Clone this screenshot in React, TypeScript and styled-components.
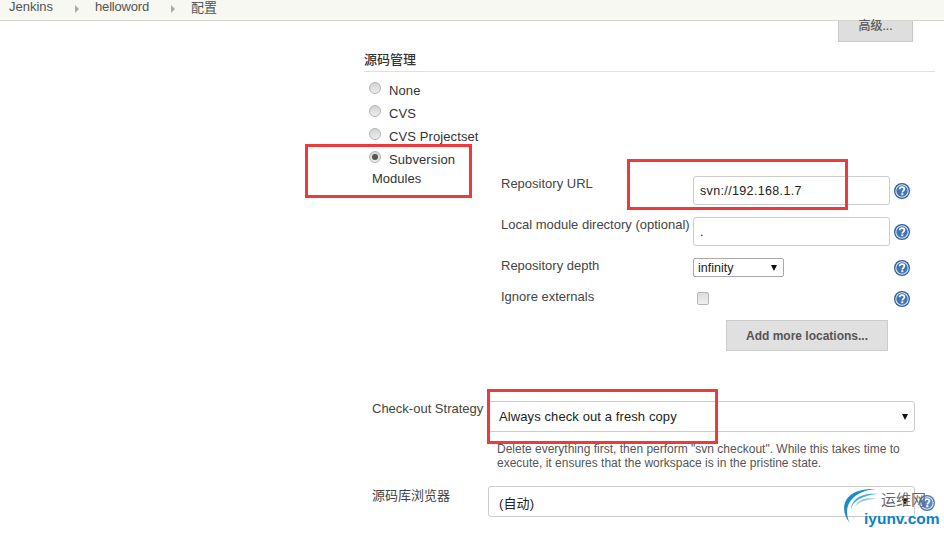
import React from 'react';
import styled, { createGlobalStyle } from 'styled-components';

const GlobalStyle = createGlobalStyle`
  html, body {
    margin: 0;
    padding: 0;
    background: #fff;
  }
  body {
    font-family: 'Liberation Sans', 'Noto Sans CJK SC', sans-serif;
    font-size: 13px;
    color: #333;
  }
`;

const Page = styled.div`
  position: relative;
  width: 944px;
  height: 535px;
  overflow: hidden;
`;

const Breadcrumb = styled.nav`
  display: flex;
  align-items: center;
  height: 20px;
  padding-left: 9px;
  background: #f6f8f1;
  border-bottom: 1px solid #d3d7cf;
  color: #555;
  font-size: 13px;
`;

const Crumb = styled.span<{ $tight?: boolean }>`
  margin-top: -7px;
  letter-spacing: ${p => (p.$tight ? '-0.2px' : '0')};
`;

const CrumbArrow = styled.span`
  width: 0;
  height: 0;
  margin: -3px 16px 0 22px;
  border-left: 4px solid #aaa;
  border-top: 4px solid transparent;
  border-bottom: 4px solid transparent;
`;

const Content = styled.main`
  padding: 0 9px 0 364px;
`;

const AdvancedRow = styled.div`
  display: flex;
  justify-content: flex-end;
  padding-right: 22px;
`;

const AdvancedButton = styled.button`
  width: 75px;
  height: 21px;
  padding: 0 0 10px;
  background: #dedede;
  border: 1px solid #c8c8c8;
  border-top: 0;
  color: #555;
  font: 12px/6px 'Liberation Sans', 'Noto Sans CJK SC', sans-serif;
  -webkit-text-stroke: 0.2px #555;
`;

const SectionTitle = styled.h3`
  margin: 10px 0 0;
  padding-bottom: 4px;
  height: 15px;
  border-bottom: 1px solid #e0e0e0;
  color: #333;
  font-size: 13px;
  line-height: 15px;
  font-weight: 500;
`;

const RadioList = styled.div`
  display: flex;
  flex-direction: column;
  margin-top: 7px;
  padding-left: 5px;
`;

const RadioRow = styled.label`
  display: flex;
  align-items: flex-start;
  gap: 8px;
  height: 23px;
  line-height: 23px;
  color: #333;
  letter-spacing: 0.1px;
`;

const RadioDot = styled.span<{ $checked?: boolean }>`
  position: relative;
  flex: none;
  width: 12px;
  height: 12px;
  margin-top: 3px;
  border: 1px solid #b5b5b5;
  border-radius: 50%;
  box-sizing: border-box;
  background: linear-gradient(#d4d4d4, #ececec);

  &::after {
    content: '';
    display: ${p => (p.$checked ? 'block' : 'none')};
    position: absolute;
    left: 2px;
    top: 2px;
    width: 6px;
    height: 6px;
    border-radius: 50%;
    background: #555;
  }
`;

const ModulesGrid = styled.div`
  display: grid;
  grid-template-columns: 129px 192px 197px 1fr;
  margin-top: 5px;
  padding-left: 8px;
`;

const ModulesTitle = styled.div`
  grid-column: 1;
  margin-top: -5px;
  color: #333;
  line-height: 15px;
`;

const FieldLabel = styled.div`
  grid-column: 2;
  color: #444;
  line-height: 15px;
  white-space: nowrap;
`;

const FieldCell = styled.div<{ $height: number }>`
  grid-column: 3;
  height: ${p => p.$height}px;
`;

const HelpCell = styled.div<{ $top: number }>`
  grid-column: 4;
  padding: ${p => p.$top}px 0 0 4px;
`;

const TextBox = styled.input`
  display: block;
  box-sizing: border-box;
  width: 197px;
  height: 29px;
  padding: 0 6px;
  background: #fff;
  border: 1px solid #ccc;
  border-radius: 3px;
  color: #222;
  font: 12.5px 'Liberation Sans', sans-serif;
  letter-spacing: 0.35px;
  outline: none;
`;

const SelectWrap = styled.div<{ $width: number }>`
  position: relative;
  width: ${p => p.$width}px;

  &::after {
    content: '';
    position: absolute;
    right: 7px;
    top: 50%;
    margin-top: -3px;
    border-top: 6px solid #111;
    border-left: 3.5px solid transparent;
    border-right: 3.5px solid transparent;
  }
`;

const SmallSelect = styled.select`
  display: block;
  appearance: none;
  box-sizing: border-box;
  width: 100%;
  height: 19px;
  padding: 0 4px;
  background: #fff;
  border: 1px solid #a9a9a9;
  border-radius: 2px;
  color: #222;
  font: 12.5px 'Liberation Sans', sans-serif;
`;

const WideSelect = styled.select<{ $top?: number }>`
  display: block;
  appearance: none;
  box-sizing: border-box;
  width: 100%;
  height: 31px;
  padding: ${p => p.$top ?? 0}px 10px 0;
  background: #fff;
  border: 1px solid #ccc;
  border-radius: 3px;
  color: #222;
  font: 13px 'Liberation Sans', 'Noto Sans CJK SC', sans-serif;
  letter-spacing: 0.1px;
`;

const CheckBox = styled.span`
  display: block;
  box-sizing: border-box;
  width: 12px;
  height: 13px;
  margin: 3px 0 0 4px;
  background: linear-gradient(#dcdcdc, #f0f0f0);
  border: 1px solid #b5b5b5;
  border-radius: 2px;
`;

const AddRow = styled.div`
  grid-column: 2 / 5;
  padding: 7px 0 0 225px;
`;

const AddButton = styled.button`
  display: block;
  width: 162px;
  height: 31px;
  background: #e0e0e0;
  border: 1px solid #ccc;
  color: #555;
  font: bold 12px 'Liberation Sans', sans-serif;
`;

const StrategyRow = styled.div`
  display: grid;
  grid-template-columns: 116px 427px;
  margin-top: 50px;
  padding-left: 8px;
`;

const StrategyLabel = styled.div<{ $top: number }>`
  padding-top: ${p => p.$top}px;
  color: #444;
  line-height: 15px;
  white-space: nowrap;
`;

const Description = styled.p`
  margin: 0;
  padding: 10px 0 16px 9px;
  color: #555;
  font-size: 12px;
  line-height: 14px;
`;

const HelpSvg = styled.svg`
  display: block;
`;

const HelpIcon = () => (
  <HelpSvg width="16" height="16" viewBox="0 0 16 16">
    <circle cx="8" cy="8" r="8" fill="#2f5c9a" />
    <circle cx="8" cy="8" r="6.2" fill="#3f74b5" stroke="#dce6f2" strokeWidth="1.1" />
    <path d="M5.6 6.3C5.7 4.8 6.7 4.1 8 4.1c1.4 0 2.4.8 2.4 2 0 1.7-2.1 1.7-2.1 3.3" fill="none" stroke="#fff" strokeWidth="1.7" />
    <rect x="7.3" y="10.3" width="2" height="1.9" fill="#fff" />
  </HelpSvg>
);

const RedBox = styled.div<{ $x: number; $y: number; $w: number; $h: number }>`
  position: absolute;
  left: ${p => p.$x}px;
  top: ${p => p.$y}px;
  width: ${p => p.$w}px;
  height: ${p => p.$h}px;
  box-sizing: border-box;
  border: 3px solid #f03a3a;
  pointer-events: none;
`;

const Watermark = styled.div`
  position: absolute;
  left: 840px;
  top: 487px;
  width: 104px;
  height: 42px;
`;

const WatermarkLogo = styled.svg`
  position: absolute;
  left: 0;
  top: 0;
`;

const WatermarkCn = styled.span`
  position: absolute;
  left: 41px;
  top: 5px;
  color: #666;
  font-size: 15px;
  line-height: 16px;
  white-space: nowrap;
`;

const WatermarkEn = styled.span`
  position: absolute;
  left: 24px;
  top: 23px;
  color: #0a83c6;
  font-size: 15.5px;
  line-height: 17px;
  font-weight: bold;
  white-space: nowrap;
`;

const HelpFloat = styled.div`
  position: absolute;
  left: 919px;
  top: 495px;
  opacity: 0.85;
`;

export default function App() {
  return (
    <Page>
      <GlobalStyle />
      <Breadcrumb>
        <Crumb>Jenkins</Crumb>
        <CrumbArrow />
        <Crumb $tight>helloword</Crumb>
        <CrumbArrow />
        <Crumb>配置</Crumb>
      </Breadcrumb>

      <Content>
        <AdvancedRow>
          <AdvancedButton>高级...</AdvancedButton>
        </AdvancedRow>
        <SectionTitle>源码管理</SectionTitle>

        <RadioList>
          <RadioRow><RadioDot />None</RadioRow>
          <RadioRow><RadioDot />CVS</RadioRow>
          <RadioRow><RadioDot />CVS Projectset</RadioRow>
          <RadioRow><RadioDot $checked />Subversion</RadioRow>
        </RadioList>

        <ModulesGrid>
          <ModulesTitle>Modules</ModulesTitle>
          <FieldLabel>Repository URL</FieldLabel>
          <FieldCell $height={41}>
            <TextBox readOnly defaultValue="svn://192.168.1.7" />
          </FieldCell>
          <HelpCell $top={7}><HelpIcon /></HelpCell>

          <FieldLabel>Local module directory (optional)</FieldLabel>
          <FieldCell $height={41}>
            <TextBox readOnly defaultValue="." />
          </FieldCell>
          <HelpCell $top={7}><HelpIcon /></HelpCell>

          <FieldLabel>Repository depth</FieldLabel>
          <FieldCell $height={31}>
            <SelectWrap $width={91}>
              <SmallSelect defaultValue="infinity">
                <option>infinity</option>
              </SmallSelect>
            </SelectWrap>
          </FieldCell>
          <HelpCell $top={2}><HelpIcon /></HelpCell>

          <FieldLabel>Ignore externals</FieldLabel>
          <FieldCell $height={24}>
            <CheckBox />
          </FieldCell>
          <HelpCell $top={2}><HelpIcon /></HelpCell>

          <AddRow>
            <AddButton>Add more locations...</AddButton>
          </AddRow>
        </ModulesGrid>

        <StrategyRow>
          <StrategyLabel $top={0}>Check-out Strategy</StrategyLabel>
          <SelectWrap $width={427}>
            <WideSelect defaultValue="fresh">
              <option value="fresh">Always check out a fresh copy</option>
            </WideSelect>
          </SelectWrap>
          <span />
          <Description>
            Delete everything first, then perform "svn checkout". While this takes time to execute, it ensures that the workspace is in the pristine state.
          </Description>
          <StrategyLabel $top={2}>源码库浏览器</StrategyLabel>
          <SelectWrap $width={427}>
            <WideSelect $top={3} defaultValue="auto">
              <option value="auto">(自动)</option>
            </WideSelect>
          </SelectWrap>
        </StrategyRow>
      </Content>

      <RedBox $x={305} $y={144} $w={167} $h={54} />
      <RedBox $x={627} $y={159} $w={221} $h={51} />
      <RedBox $x={487} $y={389} $w={231} $h={55} />

      <HelpFloat><HelpIcon /></HelpFloat>
      <Watermark>
        <WatermarkLogo width="50" height="42" viewBox="0 0 50 42">
          <path d="M10 36C-1 24 1 0 37 2 19 3 8 12 7 24c0 5 1 9 3 12z" fill="#1a8ccb" />
          <path d="M15 33C6 22 12 5 38 7 23 8 12 14 11 23c0 4 2 7 4 10z" fill="#4aa9da" />
          <path d="M15 19C19 12 27 10 37 12 28 12 21 14 15 19z" fill="#8ecbea" />
        </WatermarkLogo>
        <WatermarkCn>运维网</WatermarkCn>
        <WatermarkEn>iyunv.com</WatermarkEn>
      </Watermark>
    </Page>
  );
}
